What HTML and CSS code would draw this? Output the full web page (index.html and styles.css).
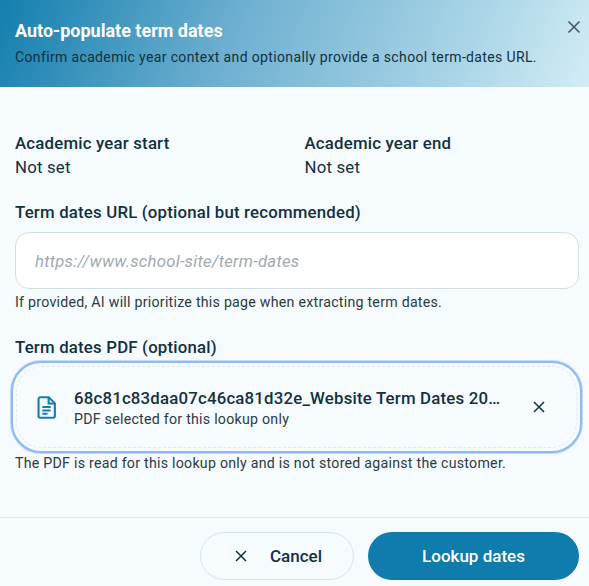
FILE: index.html
```html
<!DOCTYPE html>
<html>
<head>
	<title>Auto-populate term dates</title>
	<link rel="stylesheet" href="styles.css">
</head>
<body>
	<div class="dialog">
		<div class="header">
			<div class="title">Auto-populate term dates</div>
			<div class="subtitle">Confirm academic year context and optionally provide a school term-dates URL.</div>
			<svg class="close" viewBox="0 0 14 14"><path d="M1.5 1.5l11 11M12.5 1.5l-11 11"/></svg>
		</div>
		<div class="content">
			<div class="years">
				<div>
					<div class="label">Academic year start</div>
					<div class="value">Not set</div>
				</div>
				<div>
					<div class="label">Academic year end</div>
					<div class="value">Not set</div>
				</div>
			</div>
			<div class="label url-label">Term dates URL (optional but recommended)</div>
			<div class="url-input">https://www.school-site/term-dates</div>
			<div class="hint url-hint">If provided, AI will prioritize this page when extracting term dates.</div>
			<div class="label pdf-label">Term dates PDF (optional)</div>
			<div class="pdf-box">
				<div class="pdf-inner">
					<svg class="doc-icon" viewBox="0 0 18 22">
						<path d="M3 1.2h8.2L17 7v12.2a1.6 1.6 0 0 1-1.6 1.6H3a1.6 1.6 0 0 1-1.6-1.6V2.8A1.6 1.6 0 0 1 3 1.2z"/>
						<path d="M11 1.5v5.7h5.7M5 10.5h8M5 13.8h8M5 17h5"/>
					</svg>
					<div class="pdf-text">
						<div class="pdf-name">68c81c83daa07c46ca81d32e_Website Term Dates 2025-26.pdf</div>
						<div class="pdf-note">PDF selected for this lookup only</div>
					</div>
					<svg class="pdf-remove" viewBox="0 0 12 12"><path d="M1 1l10 10M11 1L1 11"/></svg>
				</div>
			</div>
			<div class="hint pdf-hint">The PDF is read for this lookup only and is not stored against the customer.</div>
		</div>
		<div class="footer">
			<button class="cancel"><svg viewBox="0 0 12 12"><path d="M1 1l10 10M11 1L1 11"/></svg>Cancel</button>
			<button class="lookup">Lookup dates</button>
		</div>
	</div>
</body>
</html>
```
FILE: styles.css
```css
* {
	box-sizing: border-box;
}
body {
	margin: 0;
	background-color: #f6fbff;
	font-family: Roboto, sans-serif;
	color: #12303f;
}
.dialog {
	width: 589px;
	height: 586px;
	overflow: hidden;
	display: flex;
	flex-direction: column;
}
.header {
	position: relative;
	height: 87px;
	padding: 20px 15px 0;
	background: linear-gradient(112deg, #147fae 0%, #6fb0d1 40%, #a5d2e5 75%, #d2ecf5 100%);
}
.title {
	font-size: 18px;
	line-height: 22px;
	font-weight: 700;
	color: white;
}
.subtitle {
	margin-top: 5px;
	font-size: 14px;
	line-height: 20px;
	letter-spacing: 0.36px;
	color: #12303f;
}
.close {
	position: absolute;
	top: 20px;
	right: 8px;
	width: 14px;
	height: 14px;
	fill: none;
	stroke: #44525c;
	stroke-width: 1.5;
}
.content {
	flex: 1;
	padding: 0 10px 0 15px;
}
.years {
	display: grid;
	grid-template-columns: 289.5px 1fr;
	margin-top: 45px;
}
.label {
	font-size: 16.8px;
	line-height: 22px;
	font-weight: 500;
	letter-spacing: 0.2px;
	color: #12303f;
}
.value {
	margin-top: 1px;
	font-size: 16.8px;
	line-height: 24px;
	letter-spacing: 0.2px;
	color: #12303f;
}
.url-label {
	margin-top: 22px;
}
.url-input {
	height: 57px;
	margin-top: 9px;
	padding-left: 19px;
	background-color: white;
	border: 1px solid #d3dde6;
	border-radius: 14px;
	font-size: 16.7px;
	font-style: italic;
	line-height: 58px;
	letter-spacing: 0.25px;
	color: #a0a8b4;
}
.hint {
	font-size: 14.2px;
	line-height: 18px;
	letter-spacing: 0.25px;
	color: #2c3a42;
}
.url-hint {
	margin-top: 4px;
}
.pdf-label {
	margin-top: 25px;
}
.pdf-box {
	height: 92px;
	margin: 3px -3px 0 -4px;
	padding: 3px;
	background-color: #f6fbff;
	border: 2px solid #8fb9f4;
	border-radius: 30px;
	box-shadow: 0 0 0 1px #c4d9f8;
}
.pdf-inner {
	display: flex;
	align-items: center;
	height: 100%;
	padding-left: 20px;
	border: 1px dashed #e2eaf0;
	border-radius: 26px;
}
.doc-icon {
	flex: none;
	width: 19px;
	height: 23px;
	fill: none;
	stroke: #147fae;
	stroke-width: 2;
}
.pdf-text {
	width: 432px;
	margin-left: 18px;
	padding-top: 2px;
}
.pdf-name {
	overflow: hidden;
	font-size: 16.8px;
	line-height: 22px;
	font-weight: 500;
	letter-spacing: 0.2px;
	white-space: nowrap;
	text-overflow: ellipsis;
	color: #12303f;
}
.pdf-note {
	font-size: 14.2px;
	line-height: 20px;
	letter-spacing: 0.25px;
	color: #2c3a42;
}
.pdf-remove {
	flex: none;
	width: 12px;
	height: 12px;
	margin-left: 27px;
	fill: none;
	stroke: #12303f;
	stroke-width: 1.5;
}
.pdf-hint {
	margin-top: 1px;
}
.footer {
	display: flex;
	justify-content: flex-end;
	gap: 14px;
	height: 69px;
	padding: 14px 10px 0 0;
	border-top: 1px solid #dfeaf1;
}
button {
	height: 48px;
	border-radius: 24px;
	font-family: Roboto, sans-serif;
	font-size: 17px;
	font-weight: 500;
}
.cancel {
	display: flex;
	align-items: center;
	justify-content: center;
	gap: 23px;
	width: 154px;
	padding-left: 9px;
	background-color: #f6fbff;
	border: 1px solid #d5e5ed;
	color: #12303f;
}
.cancel svg {
	width: 12px;
	height: 12px;
	fill: none;
	stroke: #12303f;
	stroke-width: 1.5;
}
.lookup {
	width: 211px;
	background-color: #0f7cad;
	border: none;
	color: white;
}
```
